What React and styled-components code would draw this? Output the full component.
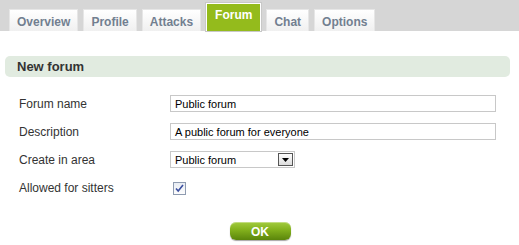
import React from 'react';
import styled, { createGlobalStyle } from 'styled-components';

const GlobalStyle = createGlobalStyle`
  html, body { margin: 0; padding: 0; background: #fff; }
  body { font-family: "Liberation Sans", Arial, sans-serif; }
`;

const tabs = ['Overview', 'Profile', 'Attacks', 'Forum', 'Chat', 'Options'];

const Page = styled.div`
  width: 519px;
  height: 245px;
  overflow: hidden;
`;

const TabBar = styled.div`
  height: 31px;
  background: #d6d6d6;
  display: flex;
  align-items: flex-end;
  gap: 5px;
  padding-left: 9px;
  box-sizing: border-box;
`;

const Tab = styled.div`
  height: ${p => (p.$active ? '28px' : '22px')};
  padding: 0 ${p => (p.$active ? '8px' : '7px')};
  box-sizing: border-box;
  display: flex;
  align-items: ${p => (p.$active ? 'flex-start' : 'center')};
  padding-top: ${p => (p.$active ? '4px' : '2px')};
  font-size: 12px;
  font-weight: bold;
  color: ${p => (p.$active ? '#fff' : '#727f90')};
  background: ${p => (p.$active ? '#94bb1c' : 'linear-gradient(#fff, #f0f0f0)')};
  border: 1px solid ${p => (p.$active ? '#fff' : '#e6e6e6')};
  border-bottom: none;
  box-shadow: ${p => (p.$active ? '0 0 0 1px #c8c8c8' : 'none')};
`;

const Content = styled.div`
  padding: 25px 9px 0 5px;
`;

const Heading = styled.div`
  height: 21px;
  background: #e1ebe0;
  border-radius: 5px;
  font-size: 13px;
  font-weight: bold;
  color: #333;
  display: flex;
  align-items: center;
  padding-left: 12px;
`;

const Form = styled.div`
  display: grid;
  grid-template-columns: 151px 1fr;
  grid-auto-rows: 17px;
  row-gap: 11px;
  padding: 18px 14px 0 14px;
  align-items: center;
`;

const Label = styled.div`
  font-size: 12px;
  color: #333;
`;

const Input = styled.div`
  height: 17px;
  width: ${p => p.$w || '326px'};
  box-sizing: border-box;
  border: 1px solid #c8c8c8;
  font-size: 11px;
  color: #000;
  padding-left: 4px;
  display: flex;
  align-items: center;
  justify-content: space-between;
`;

const SelectArrow = styled.div`
  width: 15px;
  height: 13px;
  margin-right: 1px;
  box-sizing: border-box;
  border: 1px solid #555;
  background: linear-gradient(#fdfdfd, #dcdcdc);
  display: flex;
  align-items: center;
  justify-content: center;
`;

const Check = styled.div`
  width: 13px;
  height: 13px;
  margin-left: 3px;
  margin-top: 1px;
  box-sizing: border-box;
  border: 1px solid #8e9bb0;
  background: linear-gradient(#e8ecf3, #fdfdfd);
  display: flex;
  align-items: center;
  justify-content: center;
`;

const Footer = styled.div`
  display: flex;
  justify-content: center;
  padding-top: 26px;
  padding-left: 5px;
`;

const OkButton = styled.div`
  width: 61px;
  height: 18px;
  border-radius: 6px;
  background: linear-gradient(#a3cc3e 0%, #82b01c 45%, #5a850b 100%);
  box-shadow: 0 1px 1px rgba(0, 0, 0, 0.35), inset 0 1px 0 rgba(255, 255, 255, 0.35);
  color: #fff;
  font-size: 12px;
  font-weight: bold;
  display: flex;
  align-items: center;
  justify-content: center;
  padding-top: 1px;
  box-sizing: border-box;
`;

export default function App() {
  return (
    <Page>
      <GlobalStyle />
      <TabBar>
        {tabs.map(t => (
          <Tab key={t} $active={t === 'Forum'}>{t}</Tab>
        ))}
      </TabBar>
      <Content>
        <Heading>New forum</Heading>
        <Form>
          <Label>Forum name</Label>
          <Input>Public forum</Input>
          <Label>Description</Label>
          <Input>A public forum for everyone</Input>
          <Label>Create in area</Label>
          <Input $w="125px">
            Public forum
            <SelectArrow>
              <svg width="7" height="4" viewBox="0 0 7 4">
                <path d="M0 0h7L3.5 4z" fill="#000" />
              </svg>
            </SelectArrow>
          </Input>
          <Label>Allowed for sitters</Label>
          <Check>
            <svg width="9" height="9" viewBox="0 0 9 9">
              <path d="M1 4.5l2.2 2.6L8 1" stroke="#3b4fa0" strokeWidth="1.6" fill="none" />
            </svg>
          </Check>
        </Form>
        <Footer>
          <OkButton>OK</OkButton>
        </Footer>
      </Content>
    </Page>
  );
}
